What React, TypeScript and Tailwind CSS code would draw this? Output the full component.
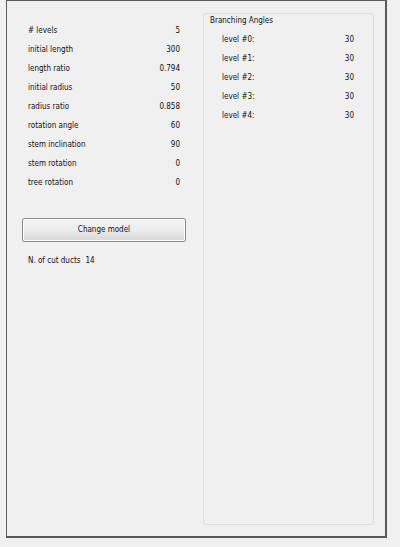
const params: [string, string][] = [
  ["# levels", "5"],
  ["initial length", "300"],
  ["length ratio", "0.794"],
  ["initial radius", "50"],
  ["radius ratio", "0.858"],
  ["rotation angle", "60"],
  ["stem inclination", "90"],
  ["stem rotation", "0"],
  ["tree rotation", "0"],
];

const angles = ["30", "30", "30", "30", "30"];

export default function App() {
  return (
    <div
      className="w-[400px] h-[547px] bg-[#f0f0f0] text-[8px] text-[#111] pl-[6px]"
      style={{ fontFamily: "'DejaVu Sans Condensed', 'DejaVu Sans', sans-serif", fontStretch: "condensed" }}
    >
      <div className="w-[381px] h-[538px] border border-[#5a5a5a] border-r-2 border-b-2 flex">
        {/* left column */}
        <div className="w-[196px] pl-[21px] pr-[23px] pt-[20px]">
          <div className="flex flex-col">
            {params.map(([label, value]) => (
              <div key={label} className="h-[19px] flex items-center">
                <span>{label}</span>
                <span className="ml-auto">{value}</span>
              </div>
            ))}
          </div>
          <button className="mt-[26px] -ml-[6px] w-[164px] h-[24px] border border-[#8a8a8a] rounded-[2px] bg-gradient-to-b from-[#f4f4f4] via-[#ececec] to-[#d8d8d8] shadow-[inset_0_0_0_1px_#fcfcfc] flex items-center justify-center">
            Change model
          </button>
          <div className="mt-[13px] flex gap-[5px]">
            <span>N. of cut ducts</span>
            <span>14</span>
          </div>
        </div>
        {/* right group box */}
        <div className="mt-[12px] w-[171px] h-[512px] border border-[#dcdfe3] rounded-[3px]">
          <div className="pl-[6px] pt-[1px] leading-[11px]">Branching Angles</div>
          <div className="pt-[4px] flex flex-col">
            {angles.map((v, i) => (
              <div key={i} className="h-[19px] flex items-center pl-[18px] pr-[19px]">
                <span>level #{i}:</span>
                <span className="ml-auto">{v}</span>
              </div>
            ))}
          </div>
        </div>
      </div>
    </div>
  );
}
